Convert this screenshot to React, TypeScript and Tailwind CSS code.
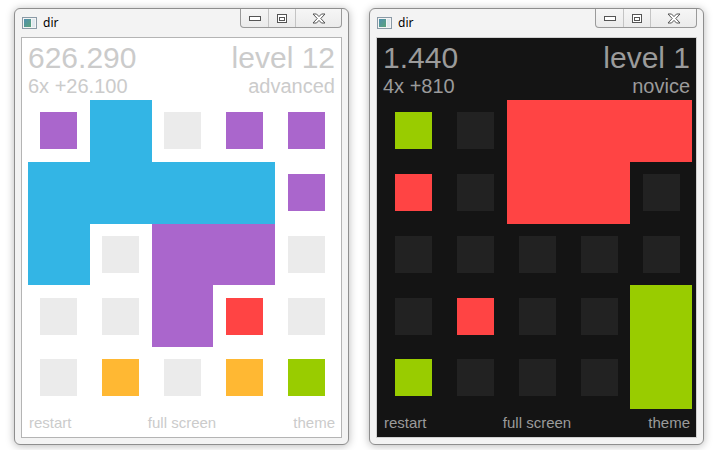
import React from "react";

type Cell = { c: string; full?: boolean };

const B = "#33b5e5";
const P = "#aa66cc";
const R = "#ff4444";
const O = "#ffb833";
const G = "#99cc00";

const lightGrid: Cell[][] = [
  [{ c: P }, { c: B, full: true }, { c: "e" }, { c: P }, { c: P }],
  [{ c: B, full: true }, { c: B, full: true }, { c: B, full: true }, { c: B, full: true }, { c: P }],
  [{ c: B, full: true }, { c: "e" }, { c: P, full: true }, { c: P, full: true }, { c: "e" }],
  [{ c: "e" }, { c: "e" }, { c: P, full: true }, { c: R }, { c: "e" }],
  [{ c: "e" }, { c: O }, { c: "e" }, { c: O }, { c: G }],
];

const darkGrid: Cell[][] = [
  [{ c: G }, { c: "e" }, { c: R, full: true }, { c: R, full: true }, { c: R, full: true }],
  [{ c: R }, { c: "e" }, { c: R, full: true }, { c: R, full: true }, { c: "e" }],
  [{ c: "e" }, { c: "e" }, { c: "e" }, { c: "e" }, { c: "e" }],
  [{ c: "e" }, { c: R }, { c: "e" }, { c: "e" }, { c: G, full: true }],
  [{ c: G }, { c: "e" }, { c: "e" }, { c: "e" }, { c: G, full: true }],
];

function WinIcon() {
  return (
    <svg width="15" height="12" viewBox="0 0 15 12">
      <defs>
        <linearGradient id="wg" x1="0" y1="0" x2="1" y2="1">
          <stop offset="0" stopColor="#4f8fb0" />
          <stop offset="1" stopColor="#5aa37a" />
        </linearGradient>
      </defs>
      <rect x="0.5" y="0.5" width="14" height="11" fill="#f4f4f4" stroke="#8a9aa6" />
      <rect x="2" y="2" width="7" height="8" fill="url(#wg)" />
      <rect x="10" y="2" width="3" height="8" fill="#dfe8ee" />
    </svg>
  );
}

function CaptionButtons() {
  return (
    <div className="flex h-[19px] overflow-hidden rounded-b-[4px] border border-t-0 border-[#9a9a9a] bg-gradient-to-b from-[#f6f6f6] to-[#ebebeb]">
      <div className="flex w-[28px] items-center justify-center border-r border-[#c4c4c4]">
        <svg width="12" height="5" viewBox="0 0 12 5">
          <rect x="0.5" y="0.5" width="11" height="4" fill="#fff" stroke="#555" />
        </svg>
      </div>
      <div className="flex w-[27px] items-center justify-center border-r border-[#c4c4c4]">
        <svg width="10" height="9" viewBox="0 0 10 9">
          <rect x="0.5" y="0.5" width="9" height="8" fill="#fff" stroke="#555" />
          <rect x="2.5" y="3.5" width="5" height="3" fill="none" stroke="#555" />
        </svg>
      </div>
      <div className="flex w-[45px] items-center justify-center">
        <svg width="14" height="11" viewBox="0 0 14 11">
          <path
            d="M1 1h3.5L7 3.6 9.5 1H13L8.8 5.5 13 10H9.5L7 7.4 4.5 10H1l4.2-4.5z"
            fill="#fff"
            stroke="#555"
            strokeWidth="1"
            strokeLinejoin="round"
          />
        </svg>
      </div>
    </div>
  );
}

function Board({ grid, dark }: { grid: Cell[][]; dark: boolean }) {
  const empty = dark ? "#222222" : "#ebebeb";
  return (
    <div className="grid w-[309px] grid-cols-5">
      {grid.flat().map((cell, i) => {
        const color = cell.c === "e" ? empty : cell.c;
        return (
          <div key={i} className="flex h-[61.75px] items-center justify-center">
            {cell.full ? (
              <div className="h-full w-full" style={{ backgroundColor: color }} />
            ) : (
              <div className="h-[37px] w-[37px]" style={{ backgroundColor: color }} />
            )}
          </div>
        );
      })}
    </div>
  );
}

function GameWindow({
  dark,
  score,
  combo,
  level,
  rank,
  grid,
}: {
  dark: boolean;
  score: string;
  combo: string;
  level: string;
  rank: string;
  grid: Cell[][];
}) {
  const text = dark ? "text-[#9b9b9b]" : "text-[#cbcbcb]";
  return (
    <div className="flex h-[437px] w-[335px] flex-col rounded-[6px] border border-[#8e8e8e] bg-[#f3f3f3] px-[6px] pb-[6px] shadow-[0_1px_8px_rgba(0,0,0,0.28)]">
      <div className="flex h-[28px] items-start">
        <div className="flex items-center gap-[6px] pl-[1px] pt-[8px]">
          <WinIcon />
          <span className="font-['Noto_Sans',sans-serif] text-[12px] leading-[12px] text-black">dir</span>
        </div>
        <div className="ml-auto">
          <CaptionButtons />
        </div>
      </div>
      <div
        className={`flex flex-1 flex-col border font-['Liberation_Sans',Arial,sans-serif] ${
          dark ? "border-[#d0d0d0] bg-[#141414]" : "border-[#b4b4b4] bg-white"
        } ${text}`}
      >
        <div className="flex justify-between pl-[6px] pr-[6px] pt-[5px]">
          <span className="text-[30px] leading-[30px]">{score}</span>
          <span className="text-[30px] leading-[30px]">{level}</span>
        </div>
        <div className="mt-[3px] flex justify-between pl-[6px] pr-[6px]">
          <span className="text-[20px] leading-[20px]">{combo}</span>
          <span className="text-[20px] leading-[20px]">{rank}</span>
        </div>
        <div className="mt-[4px] pl-[6px]">
          <Board grid={grid} dark={dark} />
        </div>
        <div className="mt-[6px] grid grid-cols-3 pl-[7px] pr-[6px] text-[15px] leading-[15px]">
          <span className="text-left">restart</span>
          <span className="text-center">full screen</span>
          <span className="text-right">theme</span>
        </div>
      </div>
    </div>
  );
}

export default function App() {
  return (
    <div className="flex h-[450px] w-[720px] gap-[20px] overflow-hidden bg-white pl-[14px] pt-[8px]">
      <GameWindow dark={false} score="626.290" combo="6x +26.100" level="level 12" rank="advanced" grid={lightGrid} />
      <GameWindow dark score="1.440" combo="4x +810" level="level 1" rank="novice" grid={darkGrid} />
    </div>
  );
}
